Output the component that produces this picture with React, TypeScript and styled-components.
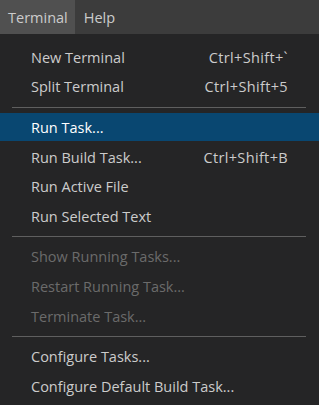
import React from "react";
import styled, { createGlobalStyle } from "styled-components";

const Global = createGlobalStyle`
  html, body { margin: 0; padding: 0; background: #252526; }
  body { font-family: "Open Sans", "Noto Sans", sans-serif; -webkit-font-smoothing: antialiased; }
`;

const Page = styled.div`
  width: 319px;
  height: 405px;
  overflow: hidden;
  background: #252526;
  display: flex;
  flex-direction: column;
`;

const MenuBar = styled.div`
  height: 34px;
  background: #3c3c3c;
  display: flex;
  align-items: stretch;
  flex-shrink: 0;
`;

const BarItem = styled.div<{ $open?: boolean }>`
  display: flex;
  align-items: center;
  padding: 0 ${(p) => (p.$open ? "7px" : "9px")} 0 ${(p) => (p.$open ? "8px" : "9px")};
  font-size: 14.5px;
  color: #cccccc;
  background: ${(p) => (p.$open ? "#505050" : "transparent")};
`;

const Menu = styled.div`
  flex: 1;
  background: #252526;
  padding-top: 8.5px;
  display: flex;
  flex-direction: column;
`;

const Row = styled.div`
  height: 29.6px;
  display: flex;
  align-items: center;
`;

const Label = styled.div<{ $active?: boolean; $disabled?: boolean }>`
  flex: 1;
  height: 28px;
  display: flex;
  align-items: center;
  justify-content: space-between;
  padding: 0 31px 0 31px;
  font-size: 14.5px;
  background: ${(p) => (p.$active ? "#094771" : "transparent")};
  color: ${(p) => (p.$active ? "#ffffff" : p.$disabled ? "#6b6b6b" : "#cccccc")};
  white-space: nowrap;
`;

const Keys = styled.span`
  font-size: 14.5px;
  letter-spacing: 0.35px;
`;

const Separator = styled.div`
  height: 11px;
  display: flex;
  align-items: center;
  padding: 0 13px 0 12px;
  &::after {
    content: "";
    flex: 1;
    height: 1px;
    background: #5f5f5f;
  }
`;

type Entry =
  | { sep: true }
  | { label: string; keys?: string; active?: boolean; disabled?: boolean };

const entries: Entry[] = [
  { label: "New Terminal", keys: "Ctrl+Shift+`" },
  { label: "Split Terminal", keys: "Ctrl+Shift+5" },
  { sep: true },
  { label: "Run Task...", active: true },
  { label: "Run Build Task...", keys: "Ctrl+Shift+B" },
  { label: "Run Active File" },
  { label: "Run Selected Text" },
  { sep: true },
  { label: "Show Running Tasks...", disabled: true },
  { label: "Restart Running Task...", disabled: true },
  { label: "Terminate Task...", disabled: true },
  { sep: true },
  { label: "Configure Tasks..." },
  { label: "Configure Default Build Task..." },
];

export default function App() {
  return (
    <Page>
      <Global />
      <MenuBar>
        <BarItem $open>Terminal</BarItem>
        <BarItem>Help</BarItem>
      </MenuBar>
      <Menu>
        {entries.map((e, i) =>
          "sep" in e ? (
            <Separator key={i} />
          ) : (
            <Row key={i}>
              <Label $active={e.active} $disabled={e.disabled}>
                <span>{e.label}</span>
                {e.keys && <Keys>{e.keys}</Keys>}
              </Label>
            </Row>
          )
        )}
      </Menu>
    </Page>
  );
}
